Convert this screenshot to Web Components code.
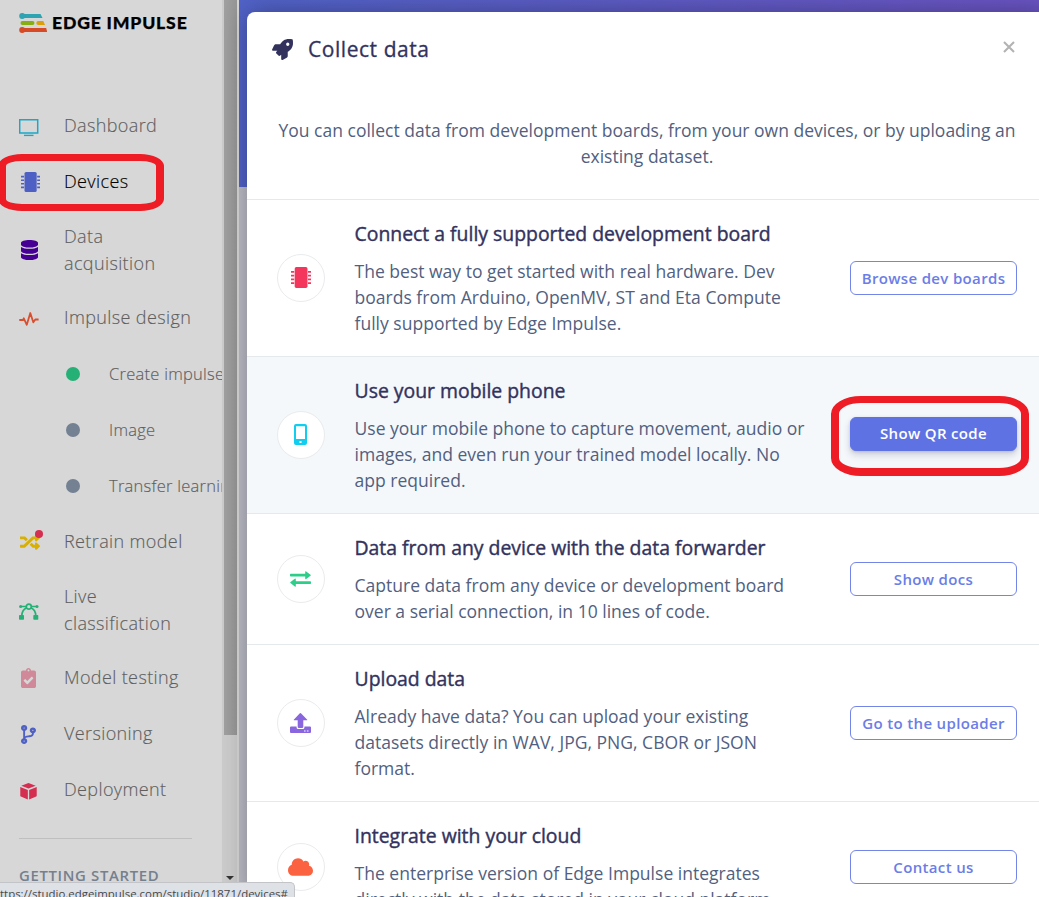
<!DOCTYPE html>
<html lang="en">
<head>
<meta charset="utf-8">
<title>Collect data - Edge Impulse</title>
<style>
html,body{margin:0;height:100%;overflow:hidden;font-family:"Open Sans","Noto Sans",sans-serif;font-size:18px}
</style>
</head>
<body>
<studio-app></studio-app>
<script>
const ICONS = {
  monitor: ['0 0 20 20', '<path d="M.7 1.7h18v13.4H.7z" fill="none" stroke="currentColor" stroke-width="1.5"/><path d="M5 17.4h9.5" stroke="currentColor" stroke-width="1.4"/>'],
  chip: ['0 0 20 20', '<rect x="3.7" y="0" width="12.8" height="20" rx="1.6"/><path d="M0 4.6h3.2M0 8.2h3.2M0 11.8h3.2M0 15.4h3.2M17 4.6h3.2M17 8.2h3.2M17 11.8h3.2M17 15.4h3.2" stroke="currentColor" stroke-width="1.6"/>'],
  database: ['0 0 448 512', '<path d="M448 73.143v45.714C448 159.143 347.667 192 224 192S0 159.143 0 118.857V73.143C0 32.857 100.333 0 224 0s224 32.857 224 73.143zM448 176v102.857C448 319.143 347.667 352 224 352S0 319.143 0 278.857V176c48.125 33.143 136.208 48.572 224 48.572S399.874 209.143 448 176zm0 160v102.857C448 479.143 347.667 512 224 512S0 479.143 0 438.857V336c48.125 33.143 136.208 48.572 224 48.572S399.874 369.143 448 336z"/>'],
  pulse: ['0 0 20 16', '<path d="M.3 9H4l.8-1.7 3 6.5L11.300 2l3 9.3L16.300 8.500h3.300" fill="none" stroke="currentColor" stroke-width="1.8" stroke-linejoin="round"/>'],
  random: ['0 0 512 512', '<path d="M504.971 359.029c9.373 9.373 9.373 24.569 0 33.941l-80 79.984c-15.01 15.01-40.971 4.49-40.971-16.971V416h-58.785a12.004 12.004 0 0 1-8.773-3.812l-70.556-75.596 53.333-57.143L352 336h32v-39.981c0-21.438 25.943-31.998 40.971-16.971l80 79.981zM12 176h84l52.781 56.551 53.333-57.143-70.556-75.596A11.999 11.999 0 0 0 122.785 96H12c-6.627 0-12 5.373-12 12v56c0 6.627 5.373 12 12 12zm372 0v39.984c0 21.46 25.961 31.98 40.971 16.971l80-79.984c9.373-9.373 9.373-24.569 0-33.941l-80-79.981C409.943 24.021 384 34.582 384 56.019V96h-58.785a12.004 12.004 0 0 0-8.773 3.812L96 336H12c-6.627 0-12 5.373-12 12v56c0 6.627 5.373 12 12 12h110.785c3.326 0 6.503-1.381 8.773-3.812L352 176h32z"/>'],
  bezier: ['0 0 20 18', '<g fill="none" stroke="currentColor" stroke-width="1.7"><circle cx="9.800" cy="3.700" r="2.500"/><path d="M1.500 3.500h5.800M12.300 3.500H18M7.500 5C4.500 6.200 3 8.500 2.800 12.500M12.100 5c3 1.200 4.500 3.500 4.700 7.500"/></g><circle cx="1.600" cy="3.500" r="1.500"/><circle cx="18" cy="3.500" r="1.500"/><rect x="0" y="12" width="5" height="4.800" rx=".7"/><rect x="14.300" y="12" width="5" height="4.800" rx=".7"/>'],
  clipboard: ['0 0 384 512', '<path d="M336 64h-80c0-35.3-28.7-64-64-64s-64 28.7-64 64H48C21.5 64 0 85.5 0 112v352c0 26.5 21.5 48 48 48h288c26.5 0 48-21.5 48-48V112c0-26.5-21.5-48-48-48zM192 40c13.3 0 24 10.7 24 24s-10.7 24-24 24-24-10.7-24-24 10.7-24 24-24zm121.2 231.8l-143 141.8c-4.7 4.7-12.3 4.6-17-.1l-82.6-83.3c-4.7-4.7-4.6-12.3.1-17L99.1 285c4.7-4.7 12.3-4.6 17 .1l46 46.4 106-105.2c4.7-4.7 12.3-4.6 17 .1l28.2 28.4c4.7 4.8 4.6 12.3-.1 17z"/>'],
  branch: ['0 0 384 512', '<path d="M384 144c0-44.2-35.8-80-80-80s-80 35.8-80 80c0 36.4 24.3 67.1 57.5 76.8-.6 16.1-4.2 28.5-11 36.9-15.4 19.2-49.3 22.4-85.2 25.7-28.2 2.6-57.4 5.4-81.3 16.9v-144c32.5-10.2 56-40.5 56-76.3 0-44.200-35.800-80-80-80S0 35.800 0 80c0 35.800 23.500 66.100 56 76.300v199.300C23.500 365.900 0 396.200 0 432c0 44.200 35.800 80 80 80s80-35.800 80-80c0-34-21.200-63.100-51.200-74.600 3.100-5.200 7.800-9.800 14.900-13.400 16.200-8.200 40.400-10.400 66.100-12.800 42.200-3.900 90-8.400 118.200-43.400 14-17.400 21.100-39.800 21.600-67.900 31.600-10.800 54.400-40.700 54.400-75.900zM80 64c8.800 0 16 7.200 16 16s-7.200 16-16 16-16-7.200-16-16 7.200-16 16-16zm0 384c-8.800 0-16-7.200-16-16s7.200-16 16-16 16 7.200 16 16-7.200 16-16 16zm224-320c8.800 0 16 7.200 16 16s-7.200 16-16 16-16-7.200-16-16 7.200-16 16-16z"/>'],
  cube: ['0 0 18 18', '<path d="M9 0l7.600 2.800L9 5.800 1.400 2.800zM.3 4.200l8 3.100V17.600L.9 14.400Q.3 14.100.3 13.400zM17.700 4.200l-8 3.100V17.600l7.400-3.200q.6-.3.6-1z"/>'],
  rocket: ['0 0 512 512', '<path d="M505.100 19.100c-1.200-5.500-6.700-11-12.200-12.200C460.700 0 435.500 0 410.400 0 307.200 0 245.300 55.200 199.100 128H94.900c-16.300 0-35.600 11.900-42.900 26.500L2.600 253.300A28.400 28.400 0 0 0 0 264a24 24 0 0 0 24 24h105.500l-22.500 22.500c-11.400 11.400-13 32.300 0 45.300L156.200 405c11.200 11.200 32.200 13.200 45.300 0L224 382.500V488a24 24 0 0 0 24 24 28.600 28.600 0 0 0 10.700-2.600l98.700-49.400c14.600-7.300 26.500-26.500 26.500-42.900V312.800c72.600-46.300 128-108.400 128-211.100.1-25.200.1-50.400-6.800-82.600zM384 168a40 40 0 1 1 40-40 40 40 0 0 1-40 40z"/>'],
  mobile: ['0 0 13 21', '<path fill-rule="evenodd" d="M2 0h9a2 2 0 0 1 2 2v17a2 2 0 0 1-2 2H2a2 2 0 0 1-2-2V2a2 2 0 0 1 2-2zm0 2.300v12.700h9V2.300zm3.500 14.700v2h2v-2z"/>'],
  exchange: ['0 0 21 16', '<path d="M.8 2.800h14.400V.9q0-1.200 1-.5l4.300 3.300q.6.500 0 1l-4.300 3.300q-1 .7-1-.5V5.600H.8Q0 5.600 0 4.800V3.600q0-.8.8-.8zM20.200 10.200H5.800V8.300q0-1.200-1-.5L.5 11.100q-.6.500 0 1l4.300 3.300q1 .7 1-.5V13h14.400q.8 0 .8-.8V11q0-.8-.8-.8z"/>'],
  upload: ['0 0 21 20', '<path d="M7.700 13.800V7.300H4.400q-1.200 0-.4-.9L9.600.4q.8-.8 1.600 0L17 6.400q.8.900-.4.900h-3.300v6.500q0 1.200-1.200 1.200H8.900q-1.200 0-1.200-1.200z"/><path fill-rule="evenodd" d="M1 13.500h5.600v1q0 1.600 1.600 1.600h4.600q1.600 0 1.600-1.600v-1H20q1 0 1 1V19q0 1-1 1H1q-1 0-1-1v-4.500q0-1 1-1zm13 3.900v1h1.600v-1zm2.900 0v1h1.600v-1z"/>'],
  cloud: ['0 0 640 512', '<path d="M537.600 226.600c4.100-10.700 6.400-22.400 6.400-34.600 0-53-43-96-96-96-19.700 0-38.100 6-53.300 16.200C367 64.200 315.300 32 256 32c-88.400 0-160 71.600-160 160 0 2.700.1 5.400.2 8.100C40.200 219.800 0 273.200 0 336c0 79.500 64.500 144 144 144h368c70.700 0 128-57.300 128-128 0-61.900-44-113.600-102.400-125.400z"/>'],
  dot: ['0 0 14 14', '<circle cx="7" cy="7" r="7"/>'],
  close: ['0 0 12 12', '<path d="M1 1l10 10M11 1L1 11" stroke="currentColor" stroke-width="2.100"/>']
};

const define = (name, html, setup) => customElements.define(name, class extends HTMLElement {
  connectedCallback() {
    if (this.shadowRoot) return;
    const t = document.createElement('template');
    t.innerHTML = html;
    this.attachShadow({ mode: 'open' }).append(t.content.cloneNode(true));
    if (setup) setup(this, this.shadowRoot);
  }
});

define('ui-icon', `<style>:host{display:block;flex:none}svg{display:block;width:100%;height:100%;fill:currentColor}</style><svg preserveAspectRatio="none"></svg>`, (el, root) => {
  const [box, art] = ICONS[el.getAttribute('name')];
  const svg = root.querySelector('svg');
  svg.setAttribute('viewBox', box);
  svg.innerHTML = art;
  el.style.width = el.getAttribute('w') + 'px';
  el.style.height = el.getAttribute('h') + 'px';
});

define('brand-logo', `<style>
:host{display:flex;align-items:center;gap:5px;height:24px;padding:11px 0 0 19px}
svg{display:block;flex:none}
span{font:900 17.600px/24px Lato,sans-serif;letter-spacing:.82px;color:#000;white-space:nowrap;-webkit-text-stroke:.25px #000}
</style>
<svg width="28" height="20" viewBox="0 0 28 20">
<path d="M3 1h18.500l2 4H3z" fill="#2ea3b2"/><circle cx="3.200" cy="3" r="3" fill="#2ea3b2"/>
<rect x="1.500" y="8" width="14" height="4" rx="2" fill="#86ad12"/>
<path d="M19.300 8h5l1.700 4h-6.700a2 2 0 0 1 0-4z" fill="#dba009"/>
<path d="M3 15h24.200l1 4H3z" fill="#d64a26"/><circle cx="3.200" cy="17" r="3" fill="#d64a26"/>
</svg><span>EDGE IMPULSE</span>`);

define('nav-item', `<style>
:host{display:flex;align-items:center;box-sizing:border-box;height:56px;padding-left:19px;color:#5f5f5f;font-weight:300;font-size:18px;line-height:27px;letter-spacing:.38px;white-space:nowrap;-webkit-text-stroke:.15px currentColor}
:host([tall]){height:80px}
:host([active]){color:#000}
:host([sub]){padding-left:66px;font-size:16.500px;letter-spacing:.26px}
.ic{width:45px;display:flex;flex:none;position:relative}
:host([sub]) .ic{width:43px}
.label{padding-bottom:2px}
:host([tall]) .label{padding-bottom:0}
.badge{display:none;position:absolute;left:16px;top:-3px;width:8px;height:8px;border-radius:50%;background:#d42e50}
:host([badge]) .badge{display:block}
</style><div class="ic"><slot name="icon"></slot><i class="badge"></i></div><div class="label"><slot></slot></div>`);

define('side-bar', `<style>
:host{display:grid;grid-template-columns:222px 15px;width:239px;height:897px;background:#d7d7d7;overflow:hidden}
.menu{overflow:hidden}
nav{padding-top:63px}
.rule{height:1px;background:#bfbfbf;margin:20px 30px 0 19px}
h6{margin:22px 0 0 19px;font:600 14.900px/28px "Open Sans";letter-spacing:.66px;color:#74808e;white-space:nowrap}
.track{background:#cbcbcb;display:flex;flex-direction:column;justify-content:space-between;align-items:center;padding:0 0 17px 2px}
.thumb{height:735px;width:13px;background:linear-gradient(90deg,#a0a0a0,#969696)}
.arrow{width:0;border:4px solid transparent;border-top-color:#333;border-bottom:0;margin:0 0 0 -1px}
</style>
<div class="menu"><brand-logo></brand-logo><nav>
<nav-item><ui-icon slot="icon" name="monitor" w="20" h="20" style="color:#17a9c9;margin-top:3px"></ui-icon>Dashboard</nav-item>
<nav-item active><ui-icon slot="icon" name="chip" w="19" h="20" style="color:#4f60c4;margin-left:2px"></ui-icon>Devices</nav-item>
<nav-item tall><ui-icon slot="icon" name="database" w="17" h="20" style="color:#450093;margin-left:2px"></ui-icon>Data<br>acquisition</nav-item>
<nav-item><ui-icon slot="icon" name="pulse" w="20" h="16" style="color:#d84f30;margin-top:2px"></ui-icon>Impulse design</nav-item>
<nav-item sub><ui-icon slot="icon" name="dot" w="14" h="14" style="color:#25b076"></ui-icon>Create impulse</nav-item>
<nav-item sub><ui-icon slot="icon" name="dot" w="14" h="14" style="color:#738192"></ui-icon>Image</nav-item>
<nav-item sub><ui-icon slot="icon" name="dot" w="14" h="14" style="color:#738192"></ui-icon>Transfer learning</nav-item>
<nav-item badge><ui-icon slot="icon" name="random" w="20" h="18" style="color:#d9b000;margin-left:1px"></ui-icon>Retrain model</nav-item>
<nav-item tall><ui-icon slot="icon" name="bezier" w="20" h="18" style="color:#25b076;margin-top:3px"></ui-icon>Live<br>classification</nav-item>
<nav-item><ui-icon slot="icon" name="clipboard" w="15" h="20" style="color:#d08998;margin-left:2px"></ui-icon>Model testing</nav-item>
<nav-item><ui-icon slot="icon" name="branch" w="15" h="19" style="color:#4f60c4;margin-left:2px"></ui-icon>Versioning</nav-item>
<nav-item><ui-icon slot="icon" name="cube" w="17" h="17" style="color:#d42e50;margin:3px 0 0 1px"></ui-icon>Deployment</nav-item>
</nav><div class="rule"></div><h6>GETTING STARTED</h6></div>
<div class="track"><div class="thumb"></div><div class="arrow"></div></div>`);

define('ui-button', `<style>
:host{display:block;flex:none;width:167px}
button{display:block;width:100%;height:34px;margin:0;padding:0 0 1px;border:1px solid #7485e9;border-radius:6px;background:transparent;color:#6b7de7;font:600 15px/30px "Open Sans";letter-spacing:.34px;white-space:nowrap}
:host([primary]) button{background:#5e72e4;border-color:#5e72e4;color:#fff;box-shadow:0 4px 7px rgba(50,50,93,.2),0 1px 3px rgba(0,0,0,.12);padding-bottom:2px}
</style><button><slot></slot></button>`);

define('source-row', `<style>
:host{display:flex;align-items:center;border-top:1px solid #e6e9ec;padding:20px 30px;color:#525f7f}
:host([highlight]){background:#f4f8fb}
.circle{box-sizing:border-box;width:48px;height:48px;border:1px solid #e9ebed;border-radius:50%;background:#fff;display:flex;align-items:center;justify-content:center;flex:none;margin-right:29.500px;padding:0 1px 1px 0}
.text{flex:1;min-width:0;white-space:nowrap}
h4{margin:0 0 11px;font-size:19.400px;line-height:27px;font-weight:500;color:#32325d;-webkit-text-stroke:.4px #32325d}
p{margin:0;font-size:17.550px;line-height:26px}
</style><div class="circle"><slot name="icon"></slot></div>
<div class="text"><h4><slot name="title"></slot></h4><p><slot></slot></p></div><slot name="action"></slot>`);

define('collect-dialog', `<style>
:host{display:block;width:800px;background:#fff;border-radius:8px 8px 0 0;box-shadow:0 0 24px rgba(0,0,0,.32);flex:none}
header{display:flex;align-items:center;height:74px;padding:0 32px 0 25px;color:#32325d}
h2{flex:1;margin:0 0 0 15px;font-size:21px;font-weight:500;letter-spacing:.55px;-webkit-text-stroke:.3px #32325d}
.intro{margin:0;padding:31px 0 30px;text-align:center;font-size:17.510px;line-height:26px;color:#525f7f;height:52px}
</style>
<header><ui-icon name="rocket" w="21" h="21"></ui-icon><h2>Collect data</h2><ui-icon name="close" w="12" h="12" style="color:#b3b3b3;margin:-5px 0 0"></ui-icon></header>
<p class="intro">You can collect data from development boards, from your own devices, or by uploading an<br>existing dataset.</p>
<source-row><ui-icon slot="icon" name="chip" w="20" h="21" style="color:#f5365c"></ui-icon><span slot="title">Connect a fully supported development board</span>The best way to get started with real hardware. Dev<br>boards from Arduino, OpenMV, ST and Eta Compute<br>fully supported by Edge Impulse.<ui-button slot="action">Browse dev boards</ui-button></source-row>
<source-row highlight><ui-icon slot="icon" name="mobile" w="13" h="21" style="color:#11cdef"></ui-icon><span slot="title">Use your mobile phone</span>Use your mobile phone to capture movement, audio or<br>images, and even run your trained model locally. No<br>app required.<ui-button slot="action" primary style="margin-top:-2px">Show QR code</ui-button></source-row>
<source-row><ui-icon slot="icon" name="exchange" w="21" h="16" style="color:#2dce89"></ui-icon><span slot="title">Data from any device with the data forwarder</span>Capture data from any device or development board<br>over a serial connection, in 10 lines of code.<ui-button slot="action">Show docs</ui-button></source-row>
<source-row><ui-icon slot="icon" name="upload" w="21" h="20" style="color:#8965e0"></ui-icon><span slot="title">Upload data</span>Already have data? You can upload your existing<br>datasets directly in WAV, JPG, PNG, CBOR or JSON<br>format.<ui-button slot="action">Go to the uploader</ui-button></source-row>
<source-row><ui-icon slot="icon" name="cloud" w="25" h="20" style="color:#fb6340"></ui-icon><span slot="title">Integrate with your cloud</span>The enterprise version of Edge Impulse integrates<br>directly with the data stored in your cloud platform.<ui-button slot="action">Contact us</ui-button></source-row>`);

define('status-bar', `<style>
:host{display:block;box-sizing:border-box;width:295px;height:15px;overflow:hidden;background:#dee1e6;border-top:1px solid #c2c4c8;border-right:1px solid #c2c4c8;border-radius:0 5px 0 0;color:#45484d;font-size:11.450px;line-height:15px;white-space:nowrap}
div{padding-top:3px}
</style><div><slot></slot></div>`);

define('marker-ring', `<style>:host{display:block;box-sizing:border-box;border:7px solid #ee1c24}</style>`);

define('studio-app', `<style>
:host{display:flex;position:relative;width:1039px;height:897px;overflow:hidden;background:#b5b5bf}
side-bar{flex:none}
main{flex:1;min-width:0;display:flex;box-sizing:border-box;padding:12px 0 0 8px;background:linear-gradient(90deg,#5163c8,#6a54c2) 0 0/100% 187px no-repeat #bdbdc9}
collect-dialog{position:relative}
status-bar{position:absolute;left:0;bottom:0;z-index:2}
.a{position:absolute;left:-2px;top:154px;width:166px;height:57px;border-width:7px 8px;border-radius:24px/12px;z-index:3}
.b{position:absolute;left:831px;top:396px;width:198px;height:80px;border-width:7px 8px 8px;border-radius:30px/18px;z-index:3}
</style><side-bar></side-bar><main><collect-dialog></collect-dialog></main>
<status-bar>ttps://studio.edgeimpulse.com/studio/11871/devices#</status-bar>
<marker-ring class="a"></marker-ring><marker-ring class="b"></marker-ring>`);
</script>
</body>
</html>
